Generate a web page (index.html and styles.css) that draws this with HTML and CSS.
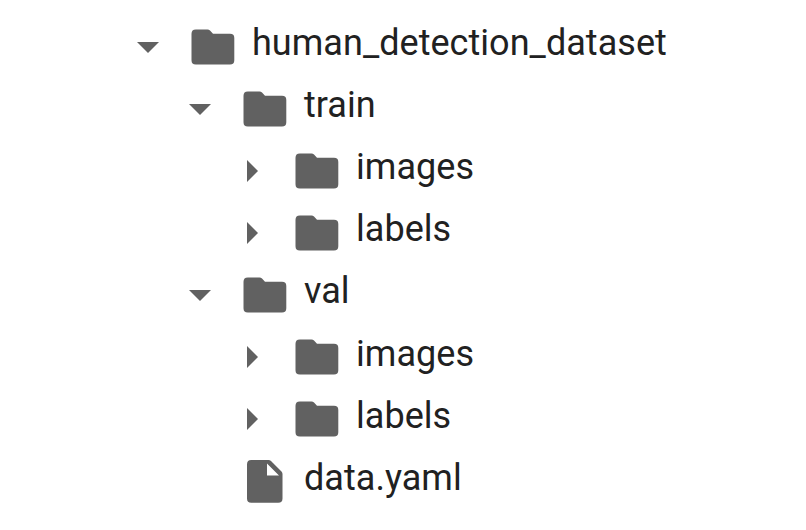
FILE: index.html
```html
<!DOCTYPE html>
<html lang="en">
<head>
<meta charset="utf-8">
<title>Files</title>
<link rel="stylesheet" href="styles.css">
</head>
<body>
<svg class="defs" aria-hidden="true">
<symbol id="folder" viewBox="0 0 44 36"><path d="M4.800 0.500H16.500Q18 0.500 19 1.500L22 4.800H39Q43.300 4.800 43.300 9V31.200Q43.300 35.500 39 35.500H4.800Q0.500 35.500 0.500 31.200V4.800Q0.500 0.500 4.800 0.500Z"/></symbol>
<symbol id="down" viewBox="0 0 22 11"><path d="M0 0H22L11 11Z"/></symbol>
<symbol id="right" viewBox="0 0 11 22"><path d="M0 0L11 11L0 22Z"/></symbol>
<symbol id="file" viewBox="0 0 36 43"><path fill-rule="evenodd" d="M4.300 0H21.500Q23 0 24 1L34.500 11.500Q35.500 12.500 35.500 14V38.500Q35.500 42.800 31.200 42.800H4.300Q0 42.800 0 38.500V4.300Q0 0 4.300 0ZM20 3.500V15.500H32Z"/></symbol>
</svg>
<ul class="tree">
<li><div class="row"><svg class="arrow down"><use href="#down"/></svg><svg class="folder"><use href="#folder"/></svg><span>human_detection_dataset</span></div>
<ul>
<li><div class="row"><svg class="arrow down"><use href="#down"/></svg><svg class="folder"><use href="#folder"/></svg><span>train</span></div>
<ul>
<li><div class="row"><svg class="arrow right"><use href="#right"/></svg><svg class="folder"><use href="#folder"/></svg><span>images</span></div></li>
<li><div class="row"><svg class="arrow right"><use href="#right"/></svg><svg class="folder"><use href="#folder"/></svg><span>labels</span></div></li>
</ul></li>
<li><div class="row"><svg class="arrow down"><use href="#down"/></svg><svg class="folder"><use href="#folder"/></svg><span>val</span></div>
<ul>
<li><div class="row"><svg class="arrow right"><use href="#right"/></svg><svg class="folder"><use href="#folder"/></svg><span>images</span></div></li>
<li><div class="row"><svg class="arrow right"><use href="#right"/></svg><svg class="folder"><use href="#folder"/></svg><span>labels</span></div></li>
</ul></li>
<li><div class="row leaf"><svg class="file"><use href="#file"/></svg><span>data.yaml</span></div></li>
</ul></li>
</ul>
</body>
</html>
```
FILE: styles.css
```css
body {
  margin: 0;
  background: #fff;
  color: #212121;
  font: 36px/62px Roboto, sans-serif;
}
.defs { display: none; }
ul { list-style: none; margin: 0; padding: 0 0 0 52px; }
.tree { padding: 15.5px 0 0 137px; }
.row { display: flex; align-items: center; height: 62.1px; }
svg { fill: #616161; flex: none; }
.arrow.down { width: 22px; height: 11px; margin: 1.5px 32px 0 0; }
.arrow.right { width: 11px; height: 22px; margin: 0 37px 0 6px; }
.folder { width: 44px; height: 36px; margin-right: 17px; }
.leaf { padding-left: 58px; }
.file { width: 36px; height: 43px; margin-right: 21px; }
span { margin-bottom: 7px; white-space: nowrap; letter-spacing: 0.04px; }
```
